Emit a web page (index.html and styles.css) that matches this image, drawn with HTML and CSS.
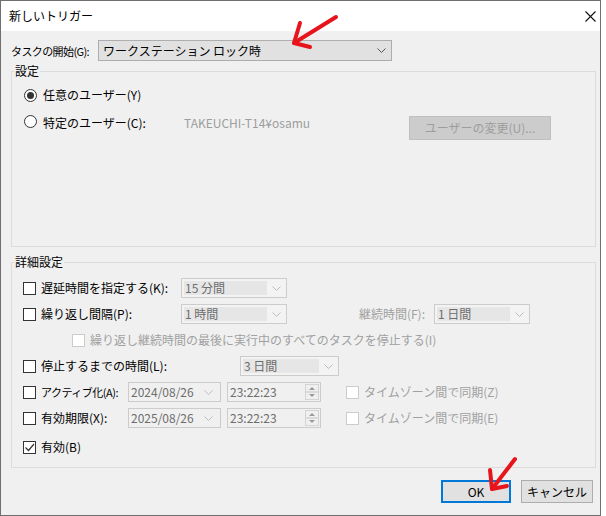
FILE: index.html
```html
<!doctype html>
<html>
  <head>
    <meta charset="UTF-8" />
    <title>新しいトリガー</title>
    <link rel="stylesheet" href="styles.css">
  </head>
  <body>
    <div class="dialog">
      <div class="titlebar">
        <span class="title">新しいトリガー</span>
        <svg class="close" width="11" height="11" viewBox="0 0 11 11">
          <path d="M0.5 0.5 L10.5 10.5 M10.5 0.5 L0.5 10.5" stroke="#111" stroke-width="1.1" fill="none" />
        </svg>
      </div>

      <div class="content">
        <!-- Start condition -->
        <div class="start-row">
          <label class="start-label">タスクの開始(G):</label>
          <div class="combo-main">
            <span>ワークステーション ロック時</span>
            <svg class="chevron" width="9" height="5" viewBox="0 0 9 5">
              <polyline points="0.5,0.5 4.5,4.5 8.5,0.5" stroke="#555" fill="none" />
            </svg>
          </div>
        </div>

        <!-- Settings group -->
        <div class="group group-settings">
          <div class="group-title">設定</div>
          <div class="radio-row first">
            <span class="radio checked"></span>
            <span class="radio-label">任意のユーザー(Y)</span>
          </div>
          <div class="radio-row second">
            <span class="radio"></span>
            <span class="radio-label user-label">特定のユーザー(C):</span>
            <span class="user-name">TAKEUCHI-T14¥osamu</span>
            <button class="btn btn-user" disabled>ユーザーの変更(U)...</button>
          </div>
        </div>

        <!-- Advanced group -->
        <div class="group group-detail">
          <div class="group-title">詳細設定</div>
          <div class="detail-rows">
            <div class="row">
              <span class="check"></span>
              <span class="chk-label lbl-repeat">遅延時間を指定する(K):</span>
              <div class="dcombo w-106">
                <span class="value">15 分間</span>
                <svg class="chev" width="9" height="5" viewBox="0 0 9 5"><polyline points="0.5,0.5 4.5,4.5 8.5,0.5" /></svg>
              </div>
            </div>

            <div class="row">
              <span class="check"></span>
              <span class="chk-label lbl-repeat">繰り返し間隔(P):</span>
              <div class="dcombo w-106">
                <span class="value">1 時間</span>
                <svg class="chev" width="9" height="5" viewBox="0 0 9 5"><polyline points="0.5,0.5 4.5,4.5 8.5,0.5" /></svg>
              </div>
              <span class="dur-label disabled-text">継続時間(F):</span>
              <div class="dcombo w-96">
                <span class="value">1 日間</span>
                <svg class="chev" width="9" height="5" viewBox="0 0 9 5"><polyline points="0.5,0.5 4.5,4.5 8.5,0.5" /></svg>
              </div>
            </div>

            <div class="row indent">
              <span class="check disabled"></span>
              <span class="chk-label disabled-text">繰り返し継続時間の最後に実行中のすべてのタスクを停止する(I)</span>
            </div>

            <div class="row">
              <span class="check"></span>
              <span class="chk-label lbl-stop">停止するまでの時間(L):</span>
              <div class="dcombo w-99">
                <span class="value">3 日間</span>
                <svg class="chev" width="9" height="5" viewBox="0 0 9 5"><polyline points="0.5,0.5 4.5,4.5 8.5,0.5" /></svg>
              </div>
            </div>

            <div class="row">
              <span class="check"></span>
              <span class="chk-label lbl-date narrow">アクティブ化(A):</span>
              <div class="dfield date">
                <span class="ftext">2024/08/26</span>
                <svg class="chev" width="9" height="5" viewBox="0 0 9 5"><polyline points="0.5,0.5 4.5,4.5 8.5,0.5" /></svg>
              </div>
              <div class="dfield time">
                <span class="ftext">23:22:23</span>
                <svg class="spin" width="14" height="16" viewBox="0 0 14 16">
                  <rect x="0.5" y="0.5" width="13" height="15" fill="#f0f0f0" stroke="#d4d4d4" />
                  <line x1="1" y1="8" x2="13" y2="8" stroke="#c4c4c4" />
                  <polygon points="4,6 7,3 10,6" fill="#9a9a9a" />
                  <polygon points="4,10 7,13 10,10" fill="#9a9a9a" />
                </svg>
              </div>
              <span class="check disabled tz-check"></span>
              <span class="tz-label disabled-text">タイムゾーン間で同期(Z)</span>
            </div>

            <div class="row">
              <span class="check"></span>
              <span class="chk-label lbl-date">有効期限(X):</span>
              <div class="dfield date">
                <span class="ftext">2025/08/26</span>
                <svg class="chev" width="9" height="5" viewBox="0 0 9 5"><polyline points="0.5,0.5 4.5,4.5 8.5,0.5" /></svg>
              </div>
              <div class="dfield time">
                <span class="ftext">23:22:23</span>
                <svg class="spin" width="14" height="16" viewBox="0 0 14 16">
                  <rect x="0.5" y="0.5" width="13" height="15" fill="#f0f0f0" stroke="#d4d4d4" />
                  <line x1="1" y1="8" x2="13" y2="8" stroke="#c4c4c4" />
                  <polygon points="4,6 7,3 10,6" fill="#9a9a9a" />
                  <polygon points="4,10 7,13 10,10" fill="#9a9a9a" />
                </svg>
              </div>
              <span class="check disabled tz-check"></span>
              <span class="tz-label disabled-text">タイムゾーン間で同期(E)</span>
            </div>

            <div class="row last">
              <span class="check checked">
                <svg width="11" height="11" viewBox="0 0 11 11">
                  <polyline points="1.5,5.5 4.5,8.5 10,2" stroke="#333" stroke-width="1.2" fill="none" />
                </svg>
              </span>
              <span class="chk-label">有効(B)</span>
            </div>
          </div>
        </div>

        <div class="footer">
          <button class="btn btn-default">OK</button>
          <button class="btn btn-cancel">キャンセル</button>
        </div>
      </div>

      <!-- red annotation arrows drawn over the dialog -->
      <svg class="arrows" width="601" height="516" viewBox="0 0 601 516">
        <g stroke="#e8141c" stroke-width="4" stroke-linecap="round" stroke-linejoin="round" fill="none">
          <path d="M336 17 L294 43" />
          <path d="M300 23 L294 43 L310 47" />
          <path d="M515 459 L492 489" />
          <path d="M490 470 L492 489 L507 486" />
        </g>
      </svg>
    </div>
  </body>
</html>
```

FILE: styles.css
```css
body {
  margin: 0;
  background: #fff;
  font-family: "Noto Sans CJK JP", "Noto Sans", sans-serif;
  font-size: 12px;
  line-height: 16px;
  color: #000;
  white-space: nowrap;
}

.dialog {
  position: relative;
  width: 601px;
  height: 516px;
  box-sizing: border-box;
  border: 1px solid #6f6f6f;
  background: #f0f0f0;
  display: flex;
  flex-direction: column;
}

.titlebar {
  height: 30px;
  background: #fff;
  display: flex;
  align-items: center;
  justify-content: space-between;
  padding: 0 4px 0 8px;
}

.close {
  display: block;
}

.content {
  padding: 9px 4px 0 10px;
  display: flex;
  flex-direction: column;
}

.start-row {
  display: flex;
  align-items: center;
  height: 21px;
}

.start-label {
  width: 87px;
  flex: none;
  font-size: 11px;
  letter-spacing: -0.6px;
}

.combo-main {
  width: 294px;
  height: 21px;
  box-sizing: border-box;
  border: 1px solid #adadad;
  background: #e1e1e1;
  display: flex;
  align-items: center;
  padding: 0 5px 0 4px;
}

.combo-main .chevron {
  margin-left: auto;
}

.group {
  border: 1px solid #dcdcdc;
  box-sizing: border-box;
}

.group-title {
  width: fit-content;
  margin: -9px 0 0 2px;
  padding: 0 1px;
  background: #f0f0f0;
}

.group-settings {
  margin-top: 10px;
  height: 176px;
}

.radio-row {
  display: flex;
  align-items: center;
  height: 20px;
  padding-left: 12px;
}

.radio-row.first {
  margin-top: 6px;
}

.radio-row.second {
  margin-top: 7px;
  align-items: flex-start;
}

.radio-row.second .radio,
.radio-row.second .radio-label,
.radio-row.second .user-name {
  margin-top: 3px;
}

.radio {
  width: 13px;
  height: 13px;
  box-sizing: border-box;
  border: 1px solid #333;
  border-radius: 50%;
  background: #fff;
  flex: none;
  display: flex;
  align-items: center;
  justify-content: center;
}

.radio.checked::after {
  content: "";
  width: 7px;
  height: 7px;
  border-radius: 50%;
  background: #333;
}

.radio-label {
  margin-left: 6px;
}

.user-label {
  width: 141px;
  flex: none;
}

.user-name {
  width: 225px;
  flex: none;
  color: #9d9d9d;
}

.btn {
  height: 23px;
  box-sizing: border-box;
  border: 1px solid #adadad;
  background: #e1e1e1;
  font: inherit;
  color: #000;
  padding: 0;
}

.btn-user {
  width: 142px;
  height: 24px;
  margin-top: 4px;
  background: #cccccc;
  border-color: #bfbfbf;
  color: #9d9d9d;
}

.group-detail {
  margin-top: 15px;
  height: 206px;
}

.detail-rows {
  display: flex;
  flex-direction: column;
  gap: 6px;
  margin-top: 8px;
  padding-left: 11px;
}

.row {
  display: flex;
  align-items: center;
  height: 20px;
}

.row.indent {
  padding-left: 49px;
}

.row.last {
  margin-top: 3px;
}

.check {
  width: 13px;
  height: 13px;
  box-sizing: border-box;
  border: 1px solid #333;
  background: #fff;
  flex: none;
  display: flex;
  align-items: center;
  justify-content: center;
}

.check.disabled {
  border-color: #cccccc;
}

.chk-label {
  margin-left: 5px;
  flex: none;
}

.lbl-repeat {
  width: 140px;
}

.lbl-stop {
  width: 199px;
}

.lbl-date {
  width: 87px;
}

.lbl-date.narrow {
  font-size: 11px;
  letter-spacing: -0.5px;
}

.disabled-text {
  color: #a0a0a0;
}

.dur-label {
  width: 138px;
  flex: none;
  margin-right: 9px;
  text-align: right;
}

.dcombo {
  height: 20px;
  box-sizing: border-box;
  border: 1px solid #cccccc;
  background: #f3f3f3;
  display: flex;
  align-items: center;
  color: #6d6d6d;
  flex: none;
}

.dcombo .value {
  flex: 1;
  height: 14px;
  line-height: 14px;
  margin: 0 0 0 2px;
  padding-left: 1px;
  background: #e6e6e6;
}

.dcombo .chev,
.dfield .chev {
  stroke: #bdbdbd;
  fill: none;
  margin: 0 5px;
}

.w-106 {
  width: 106px;
}

.w-96 {
  width: 96px;
}

.w-99 {
  width: 99px;
}

.dfield {
  height: 20px;
  box-sizing: border-box;
  border: 1px solid #cccccc;
  background: #f0f0f0;
  display: flex;
  align-items: center;
  color: #6d6d6d;
  padding-left: 2px;
  flex: none;
}

.dfield .ftext {
  flex: 1;
}

.dfield.date {
  width: 93px;
}

.dfield.date .chev {
  margin: 0 7px 0 0;
}

.dfield.time {
  width: 94px;
  margin-left: 6px;
  padding-right: 1px;
}

.spin {
  display: block;
}

.tz-check {
  margin-left: 25px;
}

.tz-label {
  margin-left: 5px;
}

.footer {
  margin-top: 12px;
  display: flex;
  justify-content: flex-end;
  gap: 10px;
  padding-right: 3px;
}

.btn-default {
  width: 70px;
  border: 2px solid #0078d7;
}

.btn-cancel {
  width: 72px;
}

.arrows {
  position: absolute;
  top: -1px;
  left: -1px;
  pointer-events: none;
}
```
